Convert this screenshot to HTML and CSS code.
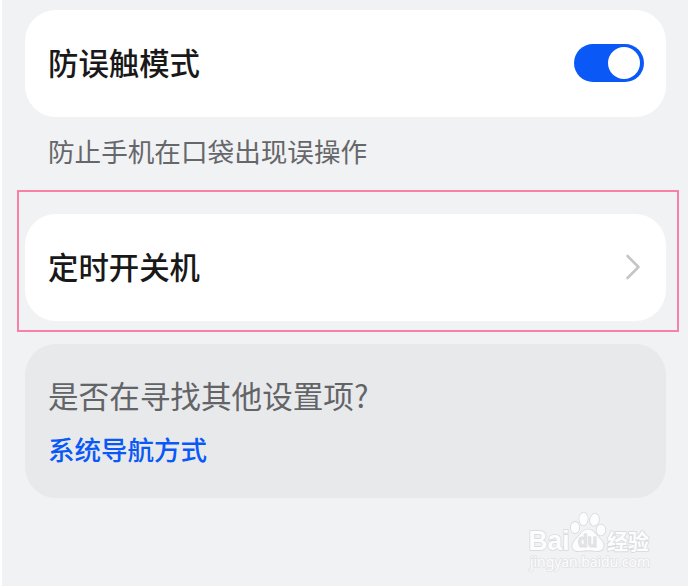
FILE: index.html
```html
<!DOCTYPE html>
<html lang="zh-CN">
<head>
<meta charset="utf-8">
<title>设置</title>
<link rel="stylesheet" href="styles.css">
</head>
<body>
<main class="screen">
  <section class="card row">
    <span class="title">防误触模式</span>
    <span class="switch" role="switch" aria-checked="true"><span class="knob"></span></span>
  </section>
  <p class="hint">防止手机在口袋出现误操作</p>
  <div class="highlight">
    <section class="card row">
      <span class="title">定时开关机</span>
      <svg class="chevron" width="16" height="28" viewBox="0 0 16 28" aria-hidden="true"><path d="M2.5 3 13.5 14 2.5 25"/></svg>
    </section>
  </div>
  <section class="card suggest">
    <p class="question">是否在寻找其他设置项?</p>
    <a class="link">系统导航方式</a>
  </section>
  <svg class="watermark" width="140" height="70" viewBox="520 505 140 70">
    <g class="mark">
      <text class="latin" x="528.5" y="550" textLength="41" lengthAdjust="spacingAndGlyphs">Bai</text>
      <ellipse cx="575" cy="527.5" rx="4.2" ry="5.6"/>
      <ellipse cx="583.5" cy="519" rx="4.2" ry="6.2"/>
      <ellipse cx="594.5" cy="519.8" rx="4.4" ry="6" transform="rotate(12 594.5 519.8)"/>
      <ellipse cx="601" cy="530" rx="4.4" ry="5.4"/>
      <path d="M588 529.5c-6 0-8 6-12 9.500-7 7-3 13 4 12 6-1 10-1 16 0 8 1 10-6 5-11-5-5-7-10.500-13-10.500z"/>
      <text class="du" x="578" y="547" textLength="19" lengthAdjust="spacingAndGlyphs">du</text>
      <text class="cjk" x="607" y="549" textLength="42">经验</text>
      <text class="url" x="530" y="566.500" textLength="120">jingyan.baidu.com</text>
    </g>
  </svg>
</main>
</body>
</html>
```
FILE: styles.css
```css
* { box-sizing: border-box; }
body {
  margin: 0;
  background: #fff;
  font-family: "Noto Sans CJK SC", sans-serif;
}
.screen {
  position: relative;
  height: 586px;
  margin: 0 1px 0 2px;
  padding: 10px 9px 0 15px;
  background: #f1f2f4;
  overflow: hidden;
}
.card {
  margin: 0 13px 0 8px;
  padding: 0 22px 0 23px;
  border-radius: 31px;
  background: #fff;
}
.row {
  display: flex;
  align-items: center;
  justify-content: space-between;
  height: 107px;
}
.title {
  margin-bottom: 3px;
  font-size: 30.4px;
  font-weight: 500;
  line-height: 44px;
  color: #191919;
}
.switch {
  display: flex;
  justify-content: flex-end;
  width: 70px;
  height: 38px;
  margin-bottom: 1px;
  padding: 3px 4px 3px 3px;
  border-radius: 19px;
  background: #0a59f7;
}
.knob {
  width: 32px;
  height: 32px;
  border-radius: 50%;
  background: #fff;
}
.hint {
  margin: 14px 0 19px 31px;
  font-size: 26.6px;
  line-height: 40px;
  color: #66676a;
}
.highlight {
  height: 142px;
  padding-top: 22px;
  border: 2px solid #f981a5;
}
.highlight .card {
  margin: 0 11px 0 6px;
}
.chevron {
  margin: 0 3px 1px 0;
  fill: none;
  stroke: #c6c6c7;
  stroke-width: 2.6;
  stroke-linecap: round;
  stroke-linejoin: round;
}
.suggest {
  height: 154px;
  margin-top: 12px;
  padding-top: 29px;
  background: #e8e9eb;
}
.question {
  margin: 0;
  font-size: 30.6px;
  line-height: 44px;
  color: #636467;
}
.link {
  display: block;
  margin-top: 13px;
  font-size: 26.5px;
  font-weight: 500;
  line-height: 38px;
  color: #0a59f7;
}
.watermark {
  position: absolute;
  left: 518px;
  top: 505px;
}
.mark {
  fill: #fdfdfe;
  stroke: #d9dadc;
  stroke-width: 1.6;
  paint-order: stroke;
}
.latin, .du {
  font-family: "Liberation Sans", sans-serif;
  font-weight: 700;
}
.latin { font-size: 28px; }
.du {
  font-size: 18px;
  fill: #e3e4e6;
  stroke-width: 1;
}
.cjk {
  font-size: 21px;
  font-weight: 700;
}
.url {
  font-family: "Noto Sans", sans-serif;
  font-size: 14px;
  stroke: #e2e3e5;
}
```
